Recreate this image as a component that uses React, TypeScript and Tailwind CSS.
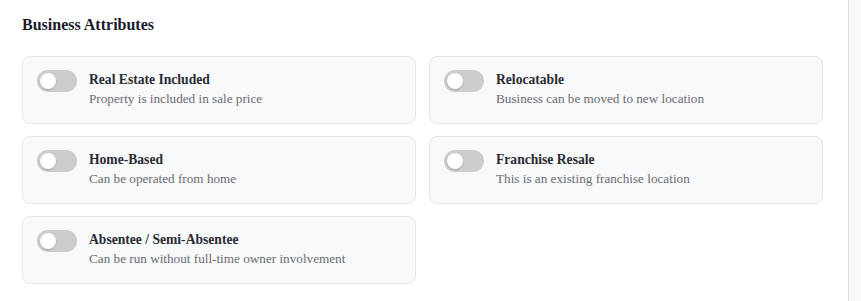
import { useState } from "react";

type Attr = { key: string; title: string; desc: string };

const attrs: Attr[] = [
  { key: "realEstate", title: "Real Estate Included", desc: "Property is included in sale price" },
  { key: "relocatable", title: "Relocatable", desc: "Business can be moved to new location" },
  { key: "homeBased", title: "Home-Based", desc: "Can be operated from home" },
  { key: "franchise", title: "Franchise Resale", desc: "This is an existing franchise location" },
  { key: "absentee", title: "Absentee / Semi-Absentee", desc: "Can be run without full-time owner involvement" },
];

function Toggle({ on, onClick }: { on: boolean; onClick: () => void }) {
  return (
    <button
      onClick={onClick}
      className={"relative shrink-0 w-[40px] h-[22px] rounded-full transition " + (on ? "bg-[#1f2937]" : "bg-[#cccccc]")}
    >
      <span
        className={"absolute top-[3px] w-[16px] h-[16px] rounded-full bg-white shadow-[0_1px_2px_rgba(0,0,0,0.2)] transition-all " + (on ? "left-[21px]" : "left-[3px]")}
      />
    </button>
  );
}

export default function App() {
  const [vals, setVals] = useState<Record<string, boolean>>({});

  return (
    <div className="flex w-[861px] h-[301px] bg-[#f8f9fb]" style={{ fontFamily: '"Liberation Serif", serif' }}>
      <div className="w-[849px] shrink-0 bg-white border-r border-[#dcdde0] pl-[22px] pr-[25px] pt-[14px]">
        <h2 className="text-[16px] font-bold text-[#1a1a2e] leading-[22px]">Business Attributes</h2>
        <div className="mt-[20px] grid grid-cols-2 gap-x-[13px] gap-y-[12px]">
          {attrs.map((a) => (
            <div key={a.key} className="flex items-start gap-[12px] rounded-[8px] border border-[#e6e7ea] bg-[#f8f9fa] px-[14px] pt-[13px] h-[68px]">
              <Toggle on={!!vals[a.key]} onClick={() => setVals((v) => ({ ...v, [a.key]: !v[a.key] }))} />
              <div className="pt-[1px]">
                <div className="text-[13.6px] font-bold text-[#2b2b33] leading-[18px]">{a.title}</div>
                <div className="text-[13.2px] text-[#6b6b73] leading-[20px]">{a.desc}</div>
              </div>
            </div>
          ))}
        </div>
      </div>
    </div>
  );
}
